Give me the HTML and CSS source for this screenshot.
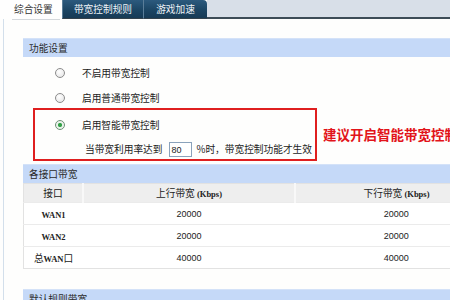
FILE: index.html
```html
<!DOCTYPE html>
<html lang="zh-CN">
<head>
    <meta charset="UTF-8">
    <title>带宽控制 - 综合设置</title>
    <link rel="stylesheet" href="styles.css">
</head>
<body>
    <div class="tabs">
        <div class="tab active">综合设置</div>
        <div class="tab dark">带宽控制规则</div>
        <div class="tab dark last">游戏加速</div>
        <div class="tab-fill"></div>
    </div>

    <div class="page">
        <div class="sec-head">功能设置</div>

        <div class="options">
            <div class="opt outer"><span class="radio"></span>不启用带宽控制</div>
            <div class="opt outer second"><span class="radio"></span>启用普通带宽控制</div>

            <div class="smart-row">
                <div class="smart-box">
                    <div class="opt inner"><span class="radio checked"></span>启用智能带宽控制</div>
                    <div class="threshold">
                        当带宽利用率达到<span class="num-input">80</span>%时，带宽控制功能才生效
                    </div>
                </div>
                <div class="advice">建议开启智能带宽控制</div>
            </div>
        </div>

        <div class="sec-head second-head">各接口带宽</div>
        <table class="bw">
            <tr class="head">
                <th class="c1">接口</th>
                <th class="c2">上行带宽 <span class="lat">(Kbps)</span></th>
                <th class="c3">下行带宽 <span class="lat">(Kbps)</span></th>
            </tr>
            <tr>
                <td><span class="lat">WAN1</span></td>
                <td>20000</td>
                <td>20000</td>
            </tr>
            <tr>
                <td><span class="lat">WAN2</span></td>
                <td>20000</td>
                <td>20000</td>
            </tr>
            <tr>
                <td>总<span class="lat">WAN</span>口</td>
                <td>40000</td>
                <td>40000</td>
            </tr>
        </table>

        <div class="sec-head third-head">默认规则带宽</div>
    </div>
</body>
</html>
```

FILE: styles.css
```css
body {
    margin: 0;
    width: 450px;
    height: 300px;
    overflow: hidden;
    background: #fefefd;
    color: #222;
    font-family: "Noto Sans CJK SC", "Noto Sans", sans-serif;
    font-size: 9.7px;
}

/* tab strip */
.tabs {
    display: flex;
    width: 450px;
    height: 19px;
}

.tab {
    line-height: 18px;
    white-space: nowrap;
}

.tab.active {
    position: relative;
    width: 62px;
    padding-left: 14px;
    box-sizing: border-box;
    background: #fefefe;
    color: #333;
}

.tab.active::after {
    content: "";
    position: absolute;
    left: 12px;
    right: 2px;
    bottom: -1px;
    height: 1px;
    background: #d4d8dc;
}

.tab.dark {
    text-align: center;
    color: #eef3f8;
    background: linear-gradient(#2c5a7e, #1b4462 60%, #173a55);
    border-left: 1px solid #5a7d98;
    border-bottom: 1px solid #34424c;
}

.tab.dark:nth-child(2) {
    width: 80px;
}

.tab.last {
    width: 63px;
    border-top-right-radius: 4px;
}

.tab-fill {
    flex: 1;
    background: #d8dfe8;
    border-bottom: 2px solid #3d4c57;
}

/* page body */
.page {
    width: 500px;
    margin-left: 3px;
    padding-left: 19px;
    padding-top: 19px;
    border-left: 1px solid #d3dfeb;
    box-sizing: border-box;
    height: 281px;
}

.sec-head {
    height: 19px;
    line-height: 19px;
    padding-left: 6px;
    background: #c5d9f8;
    color: #2a2a2a;
    border-top: 1px solid #d4e2f8;
    box-sizing: border-box;
}

.options {
    margin-left: 10px;
    padding-top: 6px;
}

.opt {
    display: flex;
    align-items: center;
    height: 20px;
    white-space: nowrap;
}

.opt.outer {
    padding-left: 22px;
}

.opt.second {
    margin-top: 5px;
}

.opt.inner {
    padding-left: 20px;
    margin-top: 5px;
}

.radio {
    display: inline-block;
    width: 10px;
    height: 10px;
    margin-right: 17px;
    border: 1px solid #8c8c8c;
    border-radius: 50%;
    box-sizing: border-box;
    background: radial-gradient(circle at 40% 35%, #ffffff, #e2e2e2);
}

.radio.checked {
    border-color: #6d8f75;
    background: radial-gradient(circle, #2f9a44 0, #3aa64f 1.8px, #e6f1e7 2.4px, #f6f6f6 100%);
}

.smart-row {
    display: flex;
    align-items: center;
}

.smart-box {
    width: 284px;
    height: 53px;
    border: 2px solid #df1f1f;
    box-sizing: border-box;
    flex-shrink: 0;
}

.threshold {
    display: flex;
    align-items: center;
    height: 20px;
    margin-top: 4px;
    padding-left: 50px;
    white-space: nowrap;
}

.num-input {
    display: inline-block;
    width: 23px;
    height: 15px;
    margin: 0 5px 0 6px;
    padding-left: 2px;
    line-height: 14px;
    border: 1px solid #8aa2bb;
    box-sizing: border-box;
    background: #fff;
    font-family: "Liberation Sans", sans-serif;
    font-size: 9px;
}

.advice {
    margin-left: 6px;
    margin-top: -2px;
    white-space: nowrap;
    color: #e2141a;
    font-weight: bold;
    font-size: 13.5px;
}

.second-head {
    margin-top: 3px;
}

/* interface table */
.bw {
    width: 476px;
    border-collapse: collapse;
    border: 1px solid #e2e2e2;
    background: #fff;
}

.bw th,
.bw td {
    padding: 0;
    text-align: center;
    white-space: nowrap;
}

.bw th {
    height: 18px;
    font-weight: normal;
    background: #eeeeee;
    border-right: 2px solid #f8f8f8;
}

.bw .c1 {
    width: 58px;
}

.bw .c2 {
    width: 210px;
}

.bw td {
    height: 21px;
    border-top: 1px solid #ebebeb;
    font-family: "Liberation Sans", sans-serif;
    font-size: 9px;
}

.bw td:first-child {
    font-family: "Noto Sans CJK SC", sans-serif;
    font-size: 9.7px;
}

.lat {
    font-family: "Liberation Serif", serif;
    font-weight: bold;
    font-size: 8.5px;
}

.third-head {
    margin-top: 20px;
}
```
